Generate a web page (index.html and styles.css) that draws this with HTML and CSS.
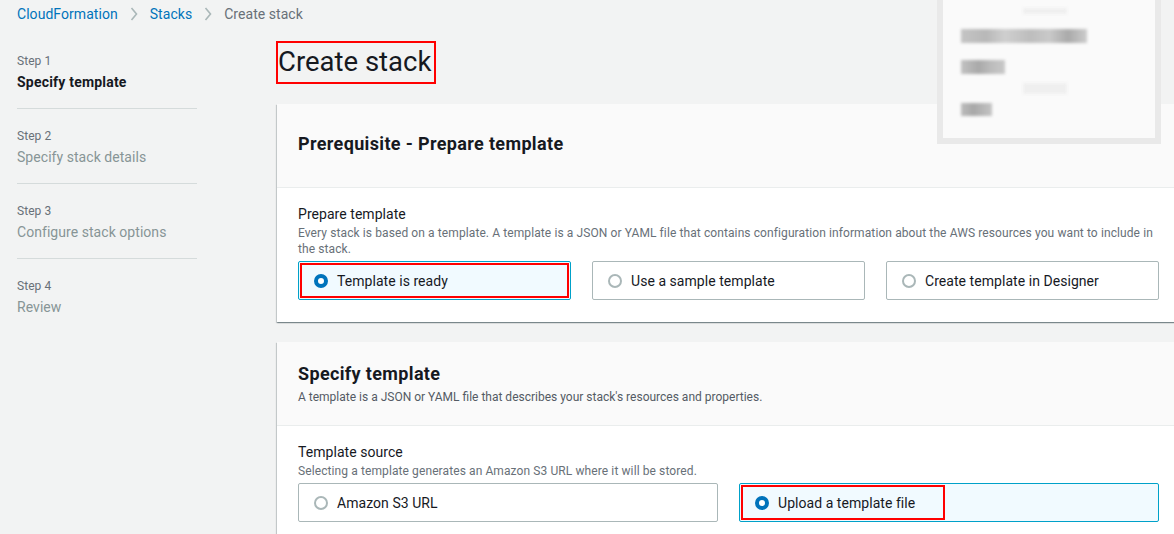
FILE: index.html
```html
<!DOCTYPE html>
<html lang="en">
<head>
<meta charset="utf-8">
<title>Create stack</title>
<link rel="stylesheet" href="styles.css">
</head>
<body>
<nav class="crumbs">
  <a class="crumb-link" href="#">CloudFormation</a>
  <svg class="chev" viewBox="0 0 8 14" width="8" height="14"><path d="M1.5 1 L6.5 7 L1.5 13" fill="none" stroke="#aab7b8" stroke-width="1.6"/></svg>
  <a class="crumb-link" href="#">Stacks</a>
  <svg class="chev" viewBox="0 0 8 14" width="8" height="14"><path d="M1.5 1 L6.5 7 L1.5 13" fill="none" stroke="#aab7b8" stroke-width="1.6"/></svg>
  <span class="crumb-current">Create stack</span>
</nav>

<div class="layout">
  <aside class="steps">
    <div class="step">
      <div class="step-num">Step 1</div>
      <div class="step-title active">Specify template</div>
    </div>
    <div class="step">
      <div class="step-num">Step 2</div>
      <div class="step-title">Specify stack details</div>
    </div>
    <div class="step">
      <div class="step-num">Step 3</div>
      <div class="step-title">Configure stack options</div>
    </div>
    <div class="step last">
      <div class="step-num">Step 4</div>
      <div class="step-title">Review</div>
    </div>
  </aside>

  <main class="main">
    <h1 class="page-title">Create stack</h1>

    <section class="card first">
      <header class="card-head">
        <h2 class="card-title">Prerequisite - Prepare template</h2>
      </header>
      <div class="card-body">
        <div class="field-label">Prepare template</div>
        <div class="field-desc">Every stack is based on a template. A template is a JSON or YAML file that contains configuration information about the AWS resources you want to include in the&nbsp;stack.</div>
        <div class="tiles three">
          <div class="tile selected">
            <div class="mark full"><span class="radio on"></span><span class="tile-text">Template is ready</span></div>
          </div>
          <div class="tile">
            <div class="plain"><span class="radio"></span><span class="tile-text">Use a sample template</span></div>
          </div>
          <div class="tile">
            <div class="plain"><span class="radio"></span><span class="tile-text">Create template in Designer</span></div>
          </div>
        </div>
      </div>
    </section>

    <section class="card second">
      <header class="card-head second">
        <h2 class="card-title">Specify template</h2>
        <div class="card-desc">A template is a JSON or YAML file that describes your stack's resources and properties.</div>
      </header>
      <div class="card-body second">
        <div class="field-label">Template source</div>
        <div class="field-desc">Selecting a template generates an Amazon S3 URL where it will be stored.</div>
        <div class="tiles two">
          <div class="tile">
            <div class="plain"><span class="radio"></span><span class="tile-text">Amazon S3 URL</span></div>
          </div>
          <div class="tile selected">
            <div class="mark short"><span class="radio on"></span><span class="tile-text">Upload a template file</span></div>
          </div>
        </div>
      </div>
    </section>
  </main>
</div>

<div class="popup" aria-hidden="true">
  <div class="popup-inner">
    <span class="blur faint f1"></span>
    <span class="blur b1"></span>
    <span class="blur b2"></span>
    <span class="blur faint f2"></span>
    <span class="blur b3"></span>
  </div>
</div>
</body>
</html>
```

FILE: styles.css
```css
* { box-sizing: border-box; }

html, body {
  margin: 0;
  padding: 0;
}

body {
  background: #f2f3f3;
  font-family: Roboto, "Noto Sans", "Liberation Sans", sans-serif;
  color: #16191f;
  width: 1174px;
  height: 534px;
  overflow: hidden;
  position: relative;
  letter-spacing: 0.05px;
}

/* breadcrumbs */
.crumbs {
  height: 28px;
  display: flex;
  align-items: center;
  padding-left: 17px;
  font-size: 14px;
}
.crumb-link {
  color: #0073bb;
  text-decoration: none;
}
.chev {
  margin: 0 12px 0 12px;
  display: block;
}
.crumb-current {
  color: #687078;
}

/* layout */
.layout {
  display: flex;
}

.steps {
  width: 277px;
  flex: none;
  padding: 6px 0 0 17px;
}
.step {
  width: 180px;
  padding: 19px 0 16px;
  border-bottom: 1px solid #d5dbdb;
}
.step.last { border-bottom: none; }
.step-num {
  font-size: 12px;
  line-height: 16px;
  color: #687078;
}
.step-title {
  margin-top: 3px;
  font-size: 14px;
  line-height: 20px;
  color: #879596;
}
.step-title.active {
  color: #16191f;
  font-weight: 700;
  letter-spacing: 0.2px;
}

/* main */
.main {
  flex: none;
  width: 902px;
  padding-top: 13px;
}
.page-title {
  display: inline-block;
  margin: 0 0 0 -1px;
  height: 43px;
  padding: 0 3px 0 0;
  border: 2px solid #ff0000;
  font-size: 27.5px;
  line-height: 38px;
  font-weight: 400;
  letter-spacing: 0;
  color: #16191f;
}

.card {
  background: #ffffff;
  box-shadow: 0 1px 1px 0 rgba(0, 28, 36, 0.3), 1px 1px 1px 0 rgba(0, 28, 36, 0.15), -1px 1px 1px 0 rgba(0, 28, 36, 0.15);
}
.card.first { margin-top: 20px; }
.card.second { margin-top: 20px; }

.card-head {
  background: #fafafa;
  border-bottom: 1px solid #eaeded;
  padding: 28px 20px 31px 21px;
}
.card-head.second {
  padding: 20px 20px 20px 21px;
}
.card-title {
  margin: 0;
  font-size: 18px;
  line-height: 24px;
  font-weight: 700;
  letter-spacing: 0.35px;
  color: #16191f;
}
.card-desc {
  margin-top: 3px;
  font-size: 12px;
  line-height: 16px;
  letter-spacing: 0;
  color: #545b64;
}

.card-body {
  padding: 16px 20px 22px 21px;
}
.card-body.second {
  padding-top: 16px;
}
.field-label {
  font-size: 14px;
  line-height: 20px;
  color: #16191f;
}
.field-desc {
  max-width: 857px;
  margin-top: 1px;
  font-size: 12px;
  line-height: 16px;
  letter-spacing: 0.1px;
  color: #687078;
}

.tiles {
  display: grid;
  gap: 21px;
  margin-top: 4px;
}
.tiles.three { grid-template-columns: 1fr 1fr 1fr; }
.tiles.two { grid-template-columns: 1fr 1fr; }

.tile {
  height: 39px;
  border: 1px solid #aab7b8;
  border-radius: 2px;
  background: #ffffff;
  padding: 1px;
  display: flex;
}
.tile.selected {
  background: #f1faff;
  border-color: #00a1c9;
}
.plain, .mark {
  display: flex;
  align-items: center;
  padding-left: 14px;
  font-size: 14px;
  color: #16191f;
}
.mark {
  border: 2px solid #ff0000;
  padding-left: 12px;
}
.mark.full { flex: 1; }
.mark.short { width: 204px; }

.radio {
  width: 14px;
  height: 14px;
  border-radius: 50%;
  border: 2px solid #aab7b8;
  background: #ffffff;
  flex: none;
  margin-right: 9px;
}
.radio.on {
  border: 4px solid #0073bb;
  background: #ffffff;
}

/* blurred popup overlay */
.popup {
  position: absolute;
  left: 937px;
  top: 0;
  width: 224px;
  height: 144px;
  background: #e9e9e9;
  padding: 0 6px 6px 6px;
}
.popup-inner {
  position: relative;
  width: 100%;
  height: 100%;
  background: #fafafa;
}
.blur {
  position: absolute;
  display: block;
  filter: blur(1.5px);
}
.b1 {
  left: 18px; top: 29px; width: 126px; height: 14px;
  background: linear-gradient(90deg, #c4c4c4 0%, #b8b8b8 20%, #cfcfcf 35%, #bdbdbd 55%, #c9c9c9 70%, #aaaaaa 85%, #cccccc 100%);
}
.b2 {
  left: 18px; top: 60px; width: 44px; height: 14px;
  background: linear-gradient(90deg, #c2c2c2, #a9a9a9 40%, #bdbdbd 70%, #c8c8c8);
}
.b3 {
  left: 18px; top: 103px; width: 31px; height: 13px;
  background: linear-gradient(90deg, #bcbcbc, #a8a8a8 40%, #c4c4c4);
}
.faint {
  background: #efefef;
}
.f1 { left: 80px; top: 8px; width: 44px; height: 6px; }
.f2 { left: 80px; top: 83px; width: 44px; height: 11px; }
```
